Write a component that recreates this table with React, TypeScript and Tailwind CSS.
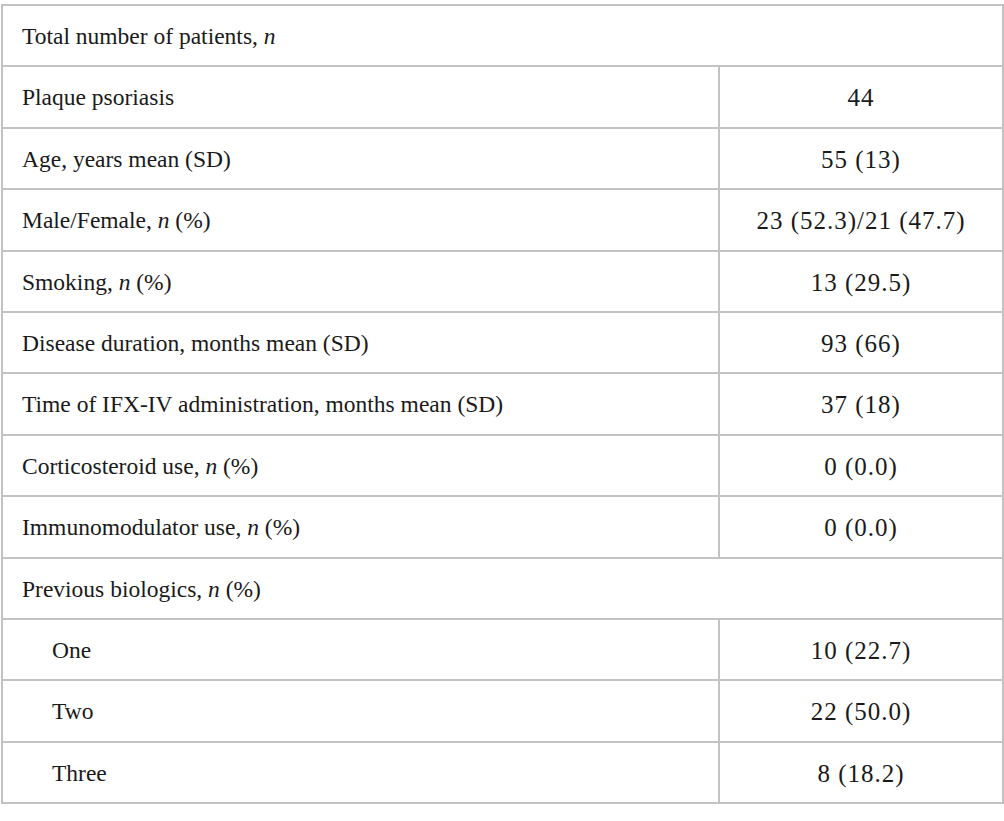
import React from "react";

type Row = { label: React.ReactNode; value?: string; span?: boolean; indent?: boolean };

const I = ({ children }: { children: React.ReactNode }) => <i>{children}</i>;

const rows: Row[] = [
  { label: <>Total number of patients, <I>n</I></>, span: true },
  { label: "Plaque psoriasis", value: "44" },
  { label: "Age, years mean (SD)", value: "55 (13)" },
  { label: <>Male/Female, <I>n</I> (%)</>, value: "23 (52.3)/21 (47.7)" },
  { label: <>Smoking, <I>n</I> (%)</>, value: "13 (29.5)" },
  { label: "Disease duration, months mean (SD)", value: "93 (66)" },
  { label: "Time of IFX-IV administration, months mean (SD)", value: "37 (18)" },
  { label: <>Corticosteroid use, <I>n</I> (%)</>, value: "0 (0.0)" },
  { label: <>Immunomodulator use, <I>n</I> (%)</>, value: "0 (0.0)" },
  { label: <>Previous biologics, <I>n</I> (%)</>, span: true },
  { label: "One", value: "10 (22.7)", indent: true },
  { label: "Two", value: "22 (50.0)", indent: true },
  { label: "Three", value: "8 (18.2)", indent: true },
];

export default function App() {
  return (
    <div className="w-[1004px] h-[821px] bg-white pt-[4px] pl-[1px]" style={{ fontFamily: '"Liberation Serif", "Times New Roman", serif' }}>
      <table className="border-collapse w-[1003px] text-[23.5px] text-[#1a1a1a]">
        <tbody>
          {rows.map((r, i) => (
            <tr key={i} className="h-[61.4px]">
              {r.span ? (
                <td colSpan={2} className="border-2 border-[#c3c3c3] pl-[19px] pt-[2px] align-middle">{r.label}</td>
              ) : (
                <>
                  <td className={`border-2 border-[#c3c3c3] w-[717px] pt-[2px] align-middle ${r.indent ? "pl-[49px]" : "pl-[19px]"}`}>{r.label}</td>
                  <td className="border-2 border-[#c3c3c3] text-center pt-[2px] align-middle text-[25px] tracking-[1px]">{r.value}</td>
                </>
              )}
            </tr>
          ))}
        </tbody>
      </table>
    </div>
  );
}
